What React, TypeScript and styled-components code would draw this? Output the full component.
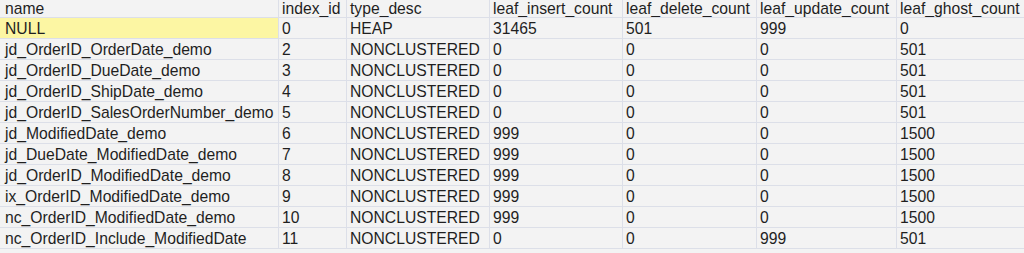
import styled, { createGlobalStyle } from 'styled-components';

const columns = [
  'name',
  'index_id',
  'type_desc',
  'leaf_insert_count',
  'leaf_delete_count',
  'leaf_update_count',
  'leaf_ghost_count',
];

const rows: string[][] = [
  ['NULL', '0', 'HEAP', '31465', '501', '999', '0'],
  ['jd_OrderID_OrderDate_demo', '2', 'NONCLUSTERED', '0', '0', '0', '501'],
  ['jd_OrderID_DueDate_demo', '3', 'NONCLUSTERED', '0', '0', '0', '501'],
  ['jd_OrderID_ShipDate_demo', '4', 'NONCLUSTERED', '0', '0', '0', '501'],
  ['jd_OrderID_SalesOrderNumber_demo', '5', 'NONCLUSTERED', '0', '0', '0', '501'],
  ['jd_ModifiedDate_demo', '6', 'NONCLUSTERED', '999', '0', '0', '1500'],
  ['jd_DueDate_ModifiedDate_demo', '7', 'NONCLUSTERED', '999', '0', '0', '1500'],
  ['jd_OrderID_ModifiedDate_demo', '8', 'NONCLUSTERED', '999', '0', '0', '1500'],
  ['ix_OrderID_ModifiedDate_demo', '9', 'NONCLUSTERED', '999', '0', '0', '1500'],
  ['nc_OrderID_ModifiedDate_demo', '10', 'NONCLUSTERED', '999', '0', '0', '1500'],
  ['nc_OrderID_Include_ModifiedDate', '11', 'NONCLUSTERED', '0', '0', '999', '501'],
];

const GlobalStyle = createGlobalStyle`
  body {
    margin: 0;
    background: #f3f3f3;
    font-family: "Liberation Sans", Arial, sans-serif;
  }
`;

const App = () => {
  return (
    <>
      <GlobalStyle />
      <Grid>
        <HeaderRow>
          {columns.map((c) => (
            <HeaderCell key={c}>{c}</HeaderCell>
          ))}
        </HeaderRow>
        {rows.map((r, i) => (
          <Row key={i}>
            {r.map((v, j) => (
              <Cell key={j} $selected={i === 0 && j === 0}>
                {v}
              </Cell>
            ))}
          </Row>
        ))}
      </Grid>
    </>
  );
};

const Grid = styled.div`
  width: 1024px;
  height: 253px;
  overflow: hidden;
  background: #f3f3f3;
  color: #1f1f1f;
  font-size: 15.7px;
`;
const HeaderRow = styled.div`
  display: grid;
  grid-template-columns: 279px 68px 143px 133px 134px 140px 127px;
  height: 17px;
  border-bottom: 1px solid #dcdfe8;
`;
const Row = styled(HeaderRow)`
  height: 20px;
`;
const HeaderCell = styled.div`
  padding: 0 0 0 3px;
  line-height: 17px;
  white-space: nowrap;
  overflow: hidden;
  border-right: 1px solid #dcdfe8;
  &:first-child {
    padding-left: 5px;
  }
  &:last-child {
    border-right: none;
  }
`;
const Cell = styled.div<{ $selected?: boolean }>`
  padding: 0 0 0 3px;
  line-height: 21px;
  white-space: nowrap;
  overflow: hidden;
  background: ${(p) => (p.$selected ? '#fcf6a3' : 'transparent')};
  border-right: 1px solid #dcdfe8;
  &:first-child {
    padding-left: 5px;
  }
  &:last-child {
    border-right: none;
  }
`;

export default App;
